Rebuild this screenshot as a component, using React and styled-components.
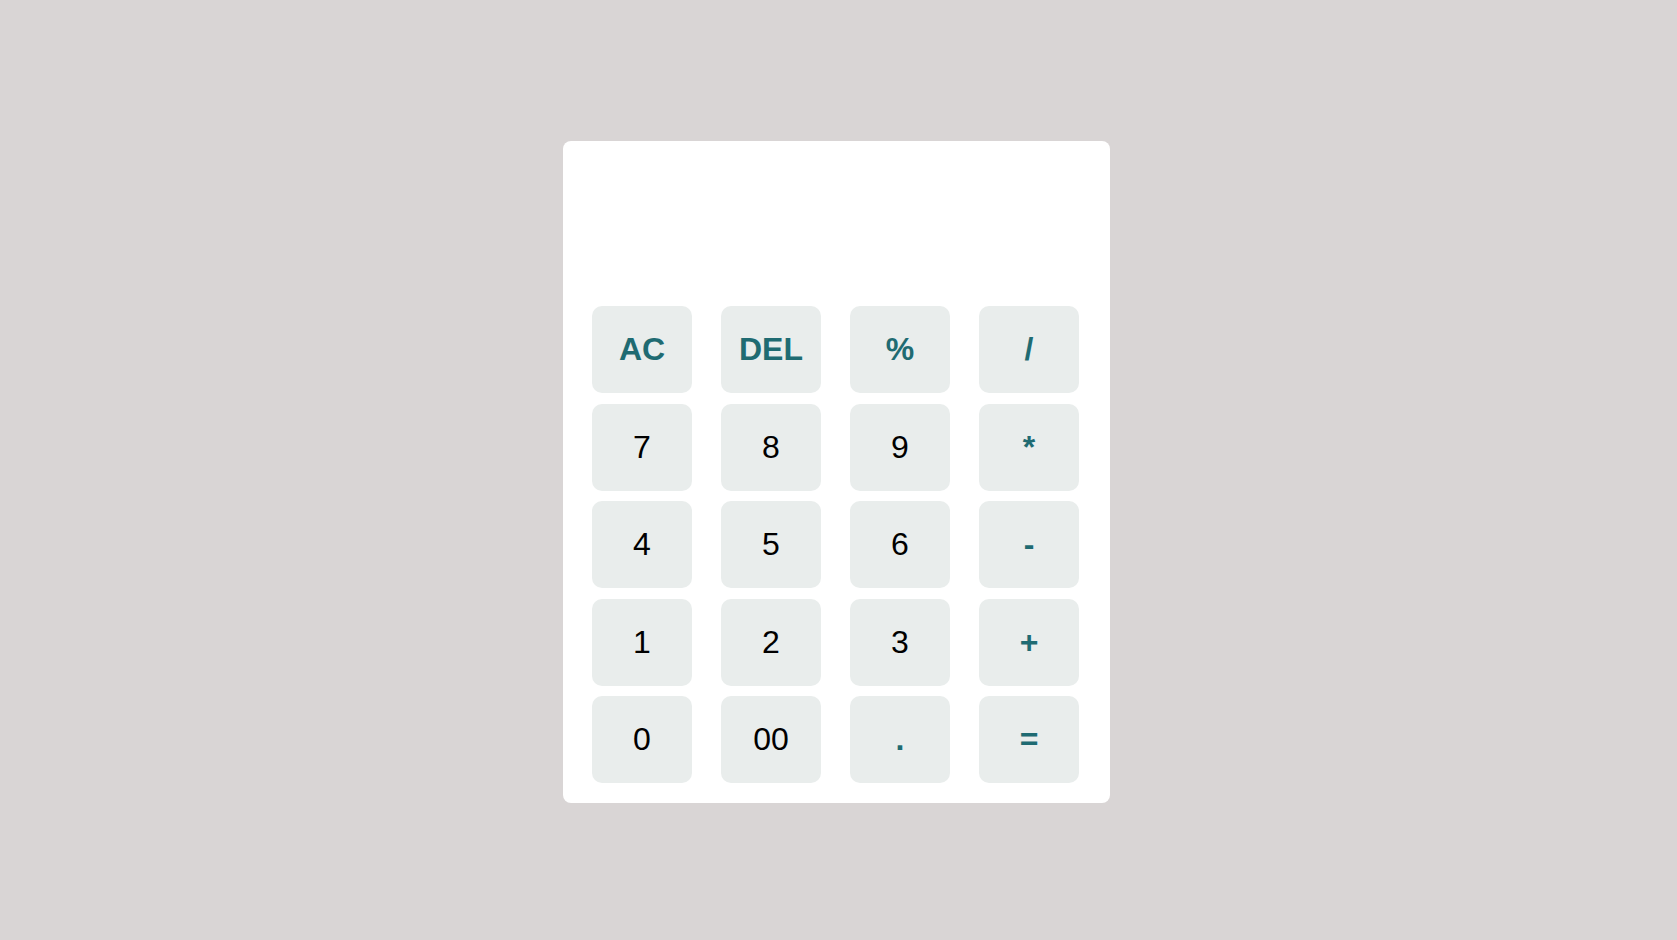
import React, { useState } from 'react';
import styled, { createGlobalStyle } from 'styled-components';

const GlobalStyle = createGlobalStyle`
  * { box-sizing: border-box; }
  body {
    margin: 0;
    background: #d9d5d5;
    font-family: 'Liberation Sans', Arial, sans-serif;
  }
`;

const Page = styled.div`
  min-height: 100vh;
  display: flex;
  align-items: center;
  justify-content: center;
  padding: 4px 4px 0 0;
`;

const Calculator = styled.div`
  width: 547px;
  background: #ffffff;
  border-radius: 8px;
  padding: 20px 30px 20px 29px;
`;

const Display = styled.div`
  height: 145px;
  display: flex;
  align-items: flex-end;
  justify-content: flex-end;
  padding: 0 4px 16px;
  font-size: 40px;
  color: #222;
  overflow: hidden;
`;

const Keypad = styled.div`
  display: grid;
  grid-template-columns: repeat(4, 100px);
  column-gap: 29px;
  row-gap: 10.5px;
`;

const Key = styled.button`
  height: 87px;
  border: none;
  border-radius: 10px;
  background: #e9edec;
  font-family: 'Liberation Sans', Arial, sans-serif;
  font-size: 32px;
  font-weight: ${({ $op }) => ($op ? 700 : 400)};
  color: ${({ $op }) => ($op ? '#1f6b72' : '#000000')};
  cursor: pointer;
  padding: 0;
`;

const keys = [
  { label: 'AC', op: true },
  { label: 'DEL', op: true },
  { label: '%', op: true },
  { label: '/', op: true },
  { label: '7' },
  { label: '8' },
  { label: '9' },
  { label: '*', op: true },
  { label: '4' },
  { label: '5' },
  { label: '6' },
  { label: '-', op: true },
  { label: '1' },
  { label: '2' },
  { label: '3' },
  { label: '+', op: true },
  { label: '0' },
  { label: '00' },
  { label: '.', op: true },
  { label: '=', op: true },
];

const App = () => {
  const [value, setValue] = useState('');

  const press = (label) => {
    if (label === 'AC') return setValue('');
    if (label === 'DEL') return setValue((v) => v.slice(0, -1));
    if (label === '=') {
      try {
        // eslint-disable-next-line no-new-func
        const result = Function(`return (${value.replace(/%/g, '/100')})`)();
        setValue(String(result));
      } catch (e) {
        setValue('Error');
      }
      return;
    }
    setValue((v) => v + label);
  };

  return (
    <Page>
      <GlobalStyle />
      <Calculator>
        <Display>{value}</Display>
        <Keypad>
          {keys.map((k) => (
            <Key key={k.label} $op={k.op} onClick={() => press(k.label)}>
              {k.label}
            </Key>
          ))}
        </Keypad>
      </Calculator>
    </Page>
  );
};

export default App;
